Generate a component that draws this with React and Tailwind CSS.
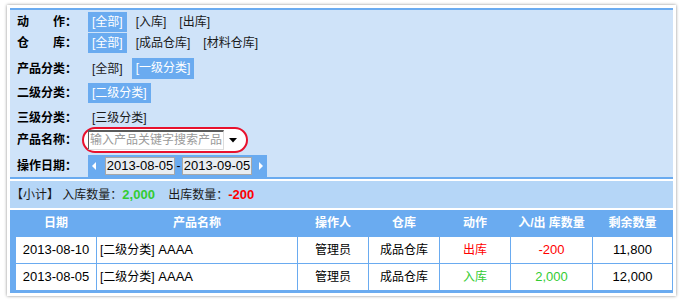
import React from "react";

const FONT = "font-['Liberation_Sans','Noto_Sans_CJK_SC',sans-serif]";

function Option({ text, active }) {
  return (
    <span
      className={`h-[20px] px-[4px] leading-[20px] text-[12px] ${
        active ? "bg-[#6aabf0] text-white" : "text-[#1a1a1a]"
      }`}
    >
      {text}
    </span>
  );
}

function Label({ children, spread }) {
  return (
    <div className="w-[71px] shrink-0">
      <div
        className={`w-[60px] flex text-[12px] font-bold text-black ${
          spread ? "justify-between" : ""
        }`}
      >
        {children}
      </div>
    </div>
  );
}

function DateBox({ value }) {
  return (
    <div className="h-[18px] w-[70px] border border-[#a8a8a8] bg-[#e8edf2] text-[13px] leading-[16px] text-black text-center">
      {value}
    </div>
  );
}

const columns = [
  { title: "日期" },
  { title: "产品名称" },
  { title: "操作人" },
  { title: "仓库" },
  { title: "动作" },
  { title: "入/出 库数量" },
  { title: "剩余数量" },
];

const rows = [
  {
    date: "2013-08-10",
    name: "[二级分类] AAAA",
    user: "管理员",
    store: "成品仓库",
    action: "出库",
    qty: "-200",
    left: "11,800",
    color: "text-[#ff0000]",
  },
  {
    date: "2013-08-05",
    name: "[二级分类] AAAA",
    user: "管理员",
    store: "成品仓库",
    action: "入库",
    qty: "2,000",
    left: "12,000",
    color: "text-[#33cc33]",
  },
];

const GRID = "grid grid-cols-[80px_200px_70px_70px_70px_81px_79px] gap-x-px";

export default function App() {
  return (
    <div className={`w-[684px] h-[305px] bg-white pt-[5px] pl-[7px] ${FONT}`}>
      <div className="w-[669px] bg-white p-[3px] shadow-[0_0_3px_rgba(0,0,0,0.45)]">
        {/* filter panel */}
        <div className="bg-[#cfe3f9] border-t-2 border-b-2 border-[#6aabf0] pl-[7px]">
          <div className="flex items-center mt-[2px] h-[20px]">
            <Label spread>
              <span>动</span>
              <span>作：</span>
            </Label>
            <div className="flex gap-[5px]">
              <Option text="[全部]" active />
              <Option text="[入库]" />
              <Option text="[出库]" />
            </div>
          </div>

          <div className="flex items-center mt-[1px] h-[20px]">
            <Label spread>
              <span>仓</span>
              <span>库：</span>
            </Label>
            <div className="flex gap-[5px]">
              <Option text="[全部]" active />
              <Option text="[成品仓库]" />
              <Option text="[材料仓库]" />
            </div>
          </div>

          <div className="flex items-center mt-[5px] h-[21px]">
            <Label>产品分类：</Label>
            <div className="flex gap-[5px] items-center">
              <Option text="[全部]" />
              <span className="h-[21px] px-[4px] leading-[21px] text-[12px] bg-[#6aabf0] text-white">
                [一级分类]
              </span>
            </div>
          </div>

          <div className="flex items-center mt-[4px] h-[20px]">
            <Label>二级分类：</Label>
            <Option text="[二级分类]" active />
          </div>

          <div className="flex items-center mt-[6px] h-[18px]">
            <Label>三级分类：</Label>
            <Option text="[三级分类]" />
          </div>

          <div className="flex items-center h-[26px]">
            <Label>产品名称：</Label>
            <div className="-ml-[6px] h-[26px] w-[166px] rounded-[13px] border-2 border-[#e8112d] bg-white flex items-center pl-[4px]">
              <div className="h-[20px] w-[136px] overflow-hidden whitespace-nowrap border-t-2 border-l border-[#5a5a5a] border-r border-r-[#dcdcdc] border-b border-b-[#dcdcdc] bg-white pl-[1px] text-[12px] leading-[17px] text-[#9a9a9a]">
                输入产品关键字搜索产品
              </div>
              <div className="w-[18px] h-[20px] flex items-center justify-center">
                <svg width="8" height="5" viewBox="0 0 8 5">
                  <path d="M0 0 L8 0 L4 4.5 Z" fill="#000" />
                </svg>
              </div>
            </div>
          </div>

          <div className="flex items-center mt-[2px] h-[22px]">
            <Label>操作日期：</Label>
            <div className="h-[22px] w-[179px] bg-[#6aabf0] flex items-center">
              <div className="w-[17px] pl-[4px] flex items-center">
                <svg width="4" height="8" viewBox="0 0 4 8">
                  <path d="M4 0 L0 4 L4 8 Z" fill="#fff" />
                </svg>
              </div>
              <DateBox value="2013-08-05" />
              <span className="w-[7px] text-center text-[12px] leading-[18px] text-black">-</span>
              <DateBox value="2013-09-05" />
              <div className="pl-[7px] flex items-center">
                <svg width="4" height="8" viewBox="0 0 4 8">
                  <path d="M0 0 L4 4 L0 8 Z" fill="#fff" />
                </svg>
              </div>
            </div>
          </div>
        </div>

        {/* subtotal */}
        <div className="mt-[2px] h-[27px] bg-[#b5d6f7] flex items-center pl-[1px] text-[12px] text-[#1a1a1a] whitespace-pre">
          <span>【小计】 入库数量：</span>
          <span className="text-[13px] font-bold text-[#33cc33]">2,000</span>
          <span>{"    "}出库数量：</span>
          <span className="text-[13px] font-bold text-[#ff0000]">-200</span>
        </div>

        {/* table */}
        <div className="mt-[2px] bg-[#6aabf0] pl-[6px] pr-[1px] pb-[3px]">
          <div className={`${GRID} h-[26px]`}>
            {columns.map((c) => (
              <div
                key={c.title}
                className="flex items-center justify-center text-[12px] font-bold text-white"
              >
                {c.title}
              </div>
            ))}
          </div>
          {rows.map((r) => (
            <div key={r.date} className={`${GRID} h-[26px] mt-px`}>
              <div className="bg-white flex items-center justify-center text-[13px] text-black">
                {r.date}
              </div>
              <div className="bg-white flex items-center pl-[3px] text-[13px] text-black">
                <span className="text-[12px]">[二级分类]</span>
                <span>&nbsp;AAAA</span>
              </div>
              <div className="bg-white flex items-center justify-center text-[12px] text-black">
                {r.user}
              </div>
              <div className="bg-white flex items-center justify-center text-[12px] text-black">
                {r.store}
              </div>
              <div className={`bg-white flex items-center justify-center text-[12px] ${r.color}`}>
                {r.action}
              </div>
              <div className={`bg-white flex items-center justify-center text-[13px] ${r.color}`}>
                {r.qty}
              </div>
              <div className="bg-white flex items-center justify-center text-[13px] text-black">
                {r.left}
              </div>
            </div>
          ))}
        </div>
      </div>
    </div>
  );
}
